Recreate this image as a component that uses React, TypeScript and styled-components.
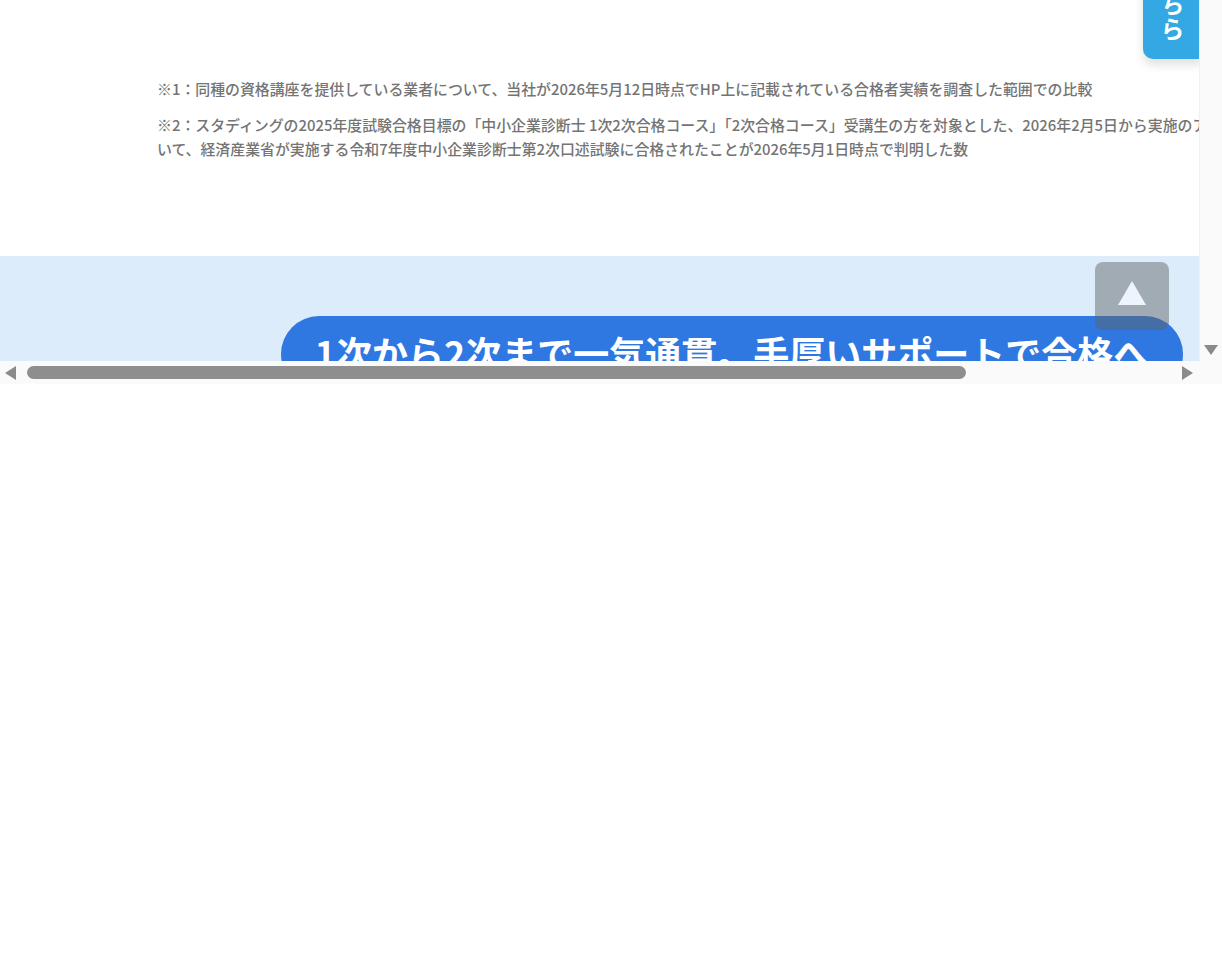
import React from "react";
import styled, { createGlobalStyle } from "styled-components";

const GlobalStyle = createGlobalStyle`
  html, body {
    margin: 0;
    padding: 0;
    background: #ffffff;
  }
  body {
    font-family: "Noto Sans CJK JP", "Noto Sans", sans-serif;
  }
`;

const Frame = styled.div`
  width: 1222px;
  height: 384px;
  display: grid;
  grid-template-columns: 1199px 23px;
  grid-template-rows: 361px 23px;
`;

const Viewport = styled.div`
  position: relative;
  overflow: hidden;
  background: #ffffff;
`;

const Document = styled.div`
  width: 1464px;
`;

const Notes = styled.div`
  width: 1150px;
  margin: 0 auto;
  padding: 77px 0 95px;
  display: flex;
  flex-direction: column;
  gap: 12px;
`;

const Note = styled.p`
  margin: 0;
  font-size: 14.9px;
  line-height: 24px;
  font-weight: 500;
  color: #747474;
`;

const Band = styled.section`
  background: #dcecfb;
  padding-top: 60px;
  display: flex;
  justify-content: center;
  height: 200px;
`;

const Pill = styled.h2`
  margin: 0;
  align-self: flex-start;
  background: #2f78e1;
  color: #ffffff;
  font-size: 36px;
  font-weight: 700;
  line-height: 52px;
  padding: 10px 34px 14px;
  border-radius: 40px;
  white-space: nowrap;
`;

const SideTab = styled.a`
  position: absolute;
  right: -2px;
  top: 59px;
  transform: translateY(-100%);
  width: 58px;
  padding: 20px 0 17px;
  display: flex;
  align-items: center;
  background: #33a8e2;
  color: #ffffff;
  border-radius: 0 0 0 10px;
  box-shadow: 0 6px 10px rgba(0, 0, 0, 0.12);
  writing-mode: vertical-rl;
  font-size: 24px;
  font-weight: 700;
  line-height: 26px;
  letter-spacing: 1px;
  text-decoration: none;
`;

const ToTop = styled.button`
  position: absolute;
  left: 1095px;
  top: 262px;
  width: 74px;
  height: 68px;
  border: none;
  border-radius: 8px;
  background: rgba(96, 98, 100, 0.47);
  display: flex;
  align-items: center;
  justify-content: center;
  padding: 0 0 6px;
  cursor: pointer;
`;

const ToTopArrow = styled.span`
  width: 0;
  height: 0;
  border-left: 14px solid transparent;
  border-right: 14px solid transparent;
  border-bottom: 24px solid #eef4fb;
`;

const VTrack = styled.div`
  background: #fafafa;
  border-left: 1px solid #f0f0f0;
  display: flex;
  flex-direction: column;
  justify-content: flex-end;
  align-items: center;
  padding-bottom: 6px;
`;

const HTrack = styled.div`
  background: #fafafa;
  display: flex;
  align-items: center;
  padding: 0 6px 0 5px;
`;

const Corner = styled.div`
  background: #fafafa;
`;

const Arrow = styled.span<{ $dir: "left" | "right" | "down" }>`
  width: 0;
  height: 0;
  flex: none;
  ${(p) =>
    p.$dir === "down"
      ? `
    border-left: 7px solid transparent;
    border-right: 7px solid transparent;
    border-top: 10px solid #8a8a8a;
  `
      : p.$dir === "left"
        ? `
    border-top: 7px solid transparent;
    border-bottom: 7px solid transparent;
    border-right: 11px solid #8a8a8a;
  `
        : `
    border-top: 7px solid transparent;
    border-bottom: 7px solid transparent;
    border-left: 11px solid #8a8a8a;
  `}
`;

const HThumbArea = styled.div`
  flex: 1;
  display: flex;
  align-items: center;
  margin: 0 9px 0 11px;
`;

const HThumb = styled.div`
  height: 13px;
  border-radius: 7px;
  background: #8e8e8e;
`;

const notes = [
  "※1：同種の資格講座を提供している業者について、当社が2026年5月12日時点でHP上に記載されている合格者実績を調査した範囲での比較",
  "※2：スタディングの2025年度試験合格目標の「中小企業診断士 1次2次合格コース」「2次合格コース」受講生の方を対象とした、2026年2月5日から実施のアンケートにおいて、経済産業省が実施する令和7年度中小企業診断士第2次口述試験に合格されたことが2026年5月1日時点で判明した数",
];

export default function App() {
  const thumbRatio = 0.819;

  return (
    <>
      <GlobalStyle />
      <Frame>
        <Viewport>
          <Document>
            <Notes>
              {notes.map((n) => (
                <Note key={n}>{n}</Note>
              ))}
            </Notes>
            <Band>
              <Pill>1次から2次まで一気通貫。手厚いサポートで合格へ</Pill>
            </Band>
          </Document>
          <SideTab href="#">お申込みはこちら</SideTab>
          <ToTop aria-label="ページトップへ">
            <ToTopArrow />
          </ToTop>
        </Viewport>
        <VTrack>
          <Arrow $dir="down" />
        </VTrack>
        <HTrack>
          <Arrow $dir="left" />
          <HThumbArea>
            <HThumb style={{ width: `${thumbRatio * 100}%` }} />
          </HThumbArea>
          <Arrow $dir="right" />
        </HTrack>
        <Corner />
      </Frame>
    </>
  );
}
